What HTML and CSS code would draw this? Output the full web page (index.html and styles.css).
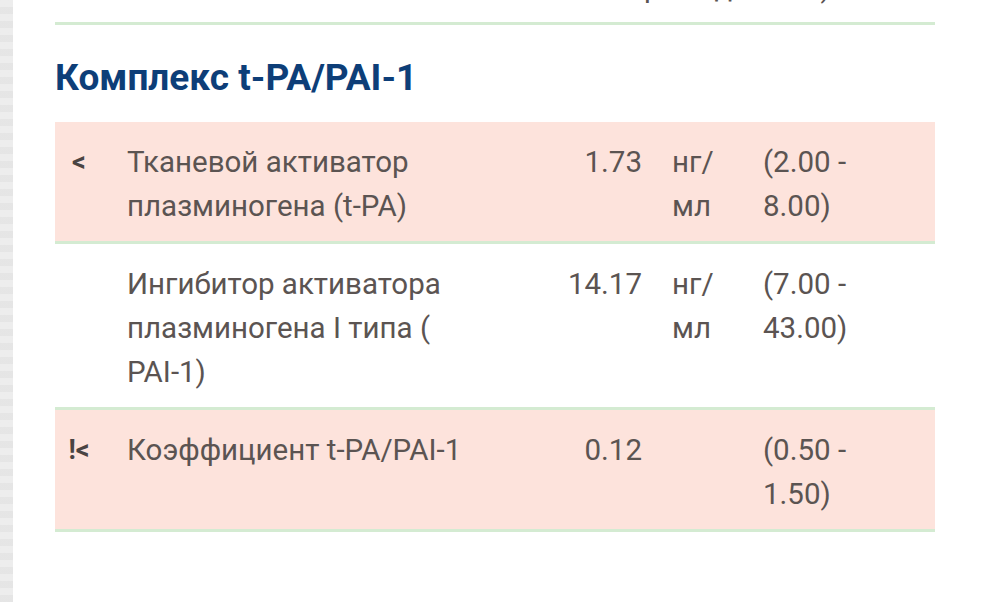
FILE: index.html
```html
<!DOCTYPE html>
<html lang="ru">
<head>
<meta charset="utf-8">
<link rel="stylesheet" href="styles.css">
</head>
<body>
<div class="strip"></div>
<main class="main">
  <div class="prev-row">
    <div class="prev-line"><span class="g1">р</span><span class="g2">д</span><span class="g3">)</span></div>
  </div>
  <h2 class="title">Комплекс t-PA/PAI-1</h2>
  <div class="row warn">
    <div class="flag">&lt;</div>
    <div class="name">Тканевой активатор плазминогена (t-PA)</div>
    <div class="value">1.73</div>
    <div class="unit">нг/<wbr>мл</div>
    <div class="range">(2.00 - 8.00)</div>
  </div>
  <div class="row">
    <div class="flag"></div>
    <div class="name">Ингибитор активатора плазминогена I типа ( PAI-1)</div>
    <div class="value">14.17</div>
    <div class="unit">нг/<wbr>мл</div>
    <div class="range">(7.00 - 43.00)</div>
  </div>
  <div class="row warn">
    <div class="flag">!&lt;</div>
    <div class="name">Коэффициент t-PA/PAI-1</div>
    <div class="value">0.12</div>
    <div class="unit"></div>
    <div class="range">(0.50 - 1.50)</div>
  </div>
</main>
</body>
</html>
```
FILE: styles.css
```css
html, body {
  margin: 0;
  padding: 0;
  background: #ffffff;
}
body {
  display: flex;
  min-height: 602px;
  font-family: Roboto, "Noto Sans", "Liberation Sans", sans-serif;
  color: #5b5452;
  overflow: hidden;
}
.strip {
  width: 13px;
  flex: none;
  background-color: #e9e9e9;
  background-image: repeating-linear-gradient(180deg, rgba(255,255,255,0.18) 0 7px, rgba(0,0,0,0.015) 7px 14px);
}
.main {
  margin-left: 42px;
  width: 880px;
}
.prev-row {
  height: 22px;
  border-bottom: 3px solid #d4ebd2;
  display: flex;
}
.prev-line {
  margin-top: -35px;
  height: 44px;
  line-height: 44px;
  font-size: 29.5px;
  display: flex;
}
.g1 { margin-left: 589px; }
.g2 { margin-left: 54px; }
.g3 { margin-left: 88px; }
.title {
  margin: 0;
  padding: 31px 0 22px;
  font-size: 37px;
  line-height: 44px;
  font-weight: 700;
  color: #0d3e78;
}
.row {
  display: grid;
  grid-template-columns: 72px 340px 175px 91px 130px 1fr;
  padding: 18px 0 13px;
  border-bottom: 3px solid #d4ebd2;
  font-size: 29.5px;
  line-height: 44px;
}
.row.warn {
  background: #fde3dc;
}
.flag {
  width: 48px;
  text-align: center;
  font-weight: 700;
  font-size: 27px;
  color: #4a4443;
}
.value {
  text-align: right;
}
.unit, .range {
  padding-left: 30px;
}
```
